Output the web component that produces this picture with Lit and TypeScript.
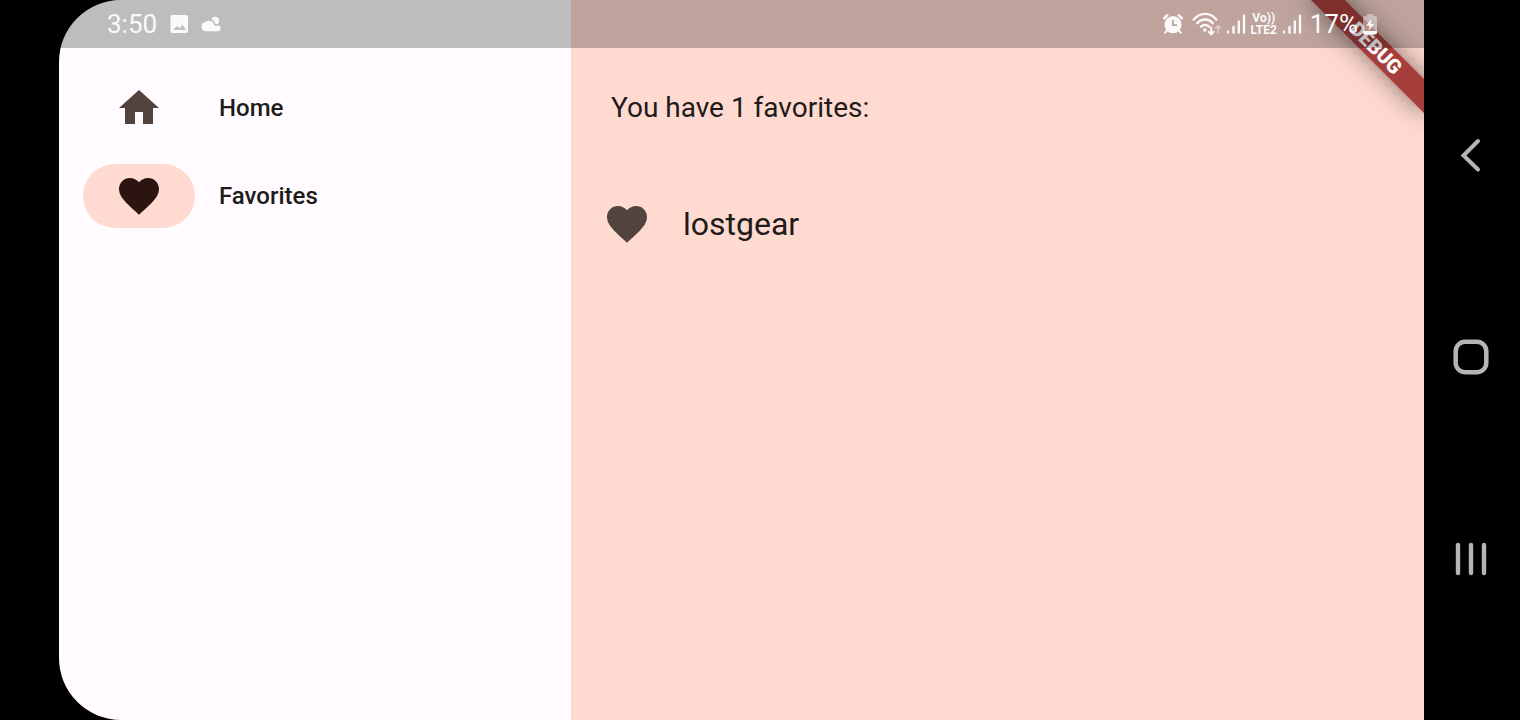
import { LitElement, html, svg, css } from "lit";
import { customElement, state } from "lit/decorators.js";

const HEART =
  "M12 21.35l-1.45-1.32C5.4 15.36 2 12.28 2 8.5 2 5.42 4.42 3 7.5 3c1.74 0 3.41.81 4.5 2.09C13.09 3.81 14.76 3 16.5 3 19.58 3 22 5.42 22 8.5c0 3.78-3.4 6.86-8.55 11.54L12 21.35z";
const HOME = "M10 20v-6h4v6h5v-8h3L12 3 2 12h3v8z";

const glyph = (d: string) => html`
  <svg class="glyph" viewBox="0 0 24 24" aria-hidden="true"><path d=${d}></path></svg>
`;

@customElement("status-bar")
class StatusBar extends LitElement {
  static styles = css`
    :host {
      display: flex;
      justify-content: space-between;
      align-items: center;
      box-sizing: border-box;
      height: 48px;
      padding: 0 46px 0 48px;
      background: rgba(0, 0, 0, 0.25);
      color: #fafafa;
      font: 400 26px/48px Roboto, sans-serif;
    }
    .group {
      display: flex;
      align-items: center;
    }
    .left {
      gap: 12px;
    }
    .right {
      gap: 4px;
    }
    .spaced {
      margin-right: 4px;
    }
    .lte {
      width: 28px;
      text-align: center;
      font-size: 12px;
      font-weight: 700;
      line-height: 12px;
    }
    svg {
      display: block;
      fill: currentColor;
    }
    .line {
      fill: none;
      stroke: currentColor;
      stroke-linecap: round;
    }
  `;

  private signal(extra = "") {
    return html`<svg class=${extra} width="20" height="22" viewBox="0 0 20 22" aria-hidden="true">
      ${svg`<g class="line" stroke-width="2.4">
        <path d="M2.200 18.700v.9M7.500 14v5.600M12.800 8.500v11.100M18 2.800v16.800"></path>
      </g>`}
    </svg>`;
  }

  render() {
    return html`
      <div class="group left">
        <span>3:50</span>
        <svg width="20" height="20" viewBox="0 0 20 20" aria-hidden="true">
          <path fill-rule="evenodd" d="M3.500 1h13.500a2 2 0 0 1 2 2v14a2 2 0 0 1-2 2H3.500a2 2 0 0 1-2-2V3a2 2 0 0 1 2-2zM4 16h13l-3.600-5.200-2.700 3.600-2.600-2.400z"></path>
        </svg>
        <svg width="22" height="20" viewBox="0 0 22 20" aria-hidden="true">
          <path d="M4.600 17.200a4.700 4.700 0 0 1-.2-9.300A5.600 5.600 0 0 1 13.400 11.400h3.400a2.900 2.900 0 0 1 0 5.800z"></path>
          <path d="M10.200 4.900a4.200 4.200 0 0 1 7.900 2c0 1.100-.4 2.200-1.300 3h-2.300c-.7-2.200-2.200-3.900-4.300-5z"></path>
        </svg>
      </div>
      <div class="group right">
        <svg class="spaced" width="22" height="22" viewBox="0 0 22 22" aria-hidden="true">
          <path fill-rule="evenodd" d="M11 3a8.600 8.600 0 1 1 0 17.200 8.600 8.600 0 0 1 0-17.200zM10 7v6h5v-1.700h-3.200V7z"></path>
          <path class="line" stroke-width="2.600" d="M2.200 5.200l3-2.800M19.800 5.200l-3-2.800"></path>
          <path class="line" stroke-width="2" d="M5 17.500l-2 2.300M17 17.500l2 2.300"></path>
        </svg>
        <svg width="30" height="24" viewBox="0 0 30 24" aria-hidden="true">
          <path class="line" stroke-width="2.400" d="M1.700 7.600C8-.1 18.300-.1 24.300 7.600M5.200 11.200c4.600-5 11.100-5 15.600 0M9 14.700c2.400-2.300 5.700-2.300 8 0"></path>
          <circle cx="12.800" cy="18" r="1.800"></circle>
          <path class="line" stroke-width="2" d="M19.200 15.500v6.500M16.700 19.800l2.500 2.500 2.500-2.500"></path>
          <path class="line" stroke-width="1.800" opacity="0.450" d="M26.200 20.500V14M24 16l2.200-2.300 2.200 2.300"></path>
        </svg>
        ${this.signal()}
        <div class="lte"><div>Vo))</div>LTE2</div>
        ${this.signal("spaced")}
        <span>17%</span>
        <svg width="16" height="22" viewBox="0 0 16 22" aria-hidden="true">
          <path opacity="0.450" d="M5 1h6v2h2a2 2 0 0 1 2 2v13H1V5a2 2 0 0 1 2-2h2z"></path>
          <path d="M1 18h14v1.500a2 2 0 0 1-2 2H3a2 2 0 0 1-2-2z"></path>
          <path d="M9.300 6L4 12.700h3.400L6.700 17.500 12 11H8.600z"></path>
        </svg>
      </div>
    `;
  }
}

@customElement("side-rail")
class SideRail extends LitElement {
  @state() private selected = "Favorites";

  static styles = css`
    :host {
      display: block;
      box-sizing: border-box;
      padding: 76px 24px 24px;
      background: #fffbff;
    }
    nav {
      display: flex;
      flex-direction: column;
      gap: 24px;
    }
    button {
      display: flex;
      align-items: center;
      gap: 24px;
      padding: 0;
      border: 0;
      background: none;
      color: #201a18;
      font: 500 24px/32px Roboto, sans-serif;
      text-align: left;
      cursor: pointer;
    }
    .pill {
      display: grid;
      place-items: center;
      width: 112px;
      height: 64px;
      border-radius: 32px;
      color: #53433f;
    }
    .active .pill {
      background: #ffdad1;
      color: #2c1510;
    }
    .glyph {
      width: 48px;
      height: 48px;
      fill: currentColor;
    }
  `;

  render() {
    const items = [
      { label: "Home", icon: HOME },
      { label: "Favorites", icon: HEART },
    ];
    return html`<nav>
      ${items.map(
        (i) => html`<button
          type="button"
          class=${i.label === this.selected ? "active" : ""}
          @click=${() => (this.selected = i.label)}
        >
          <span class="pill">${glyph(i.icon)}</span><span>${i.label}</span>
        </button>`
      )}
    </nav>`;
  }
}

@customElement("favorites-page")
class FavoritesPage extends LitElement {
  private favorites = ["lostgear"];

  static styles = css`
    :host {
      display: block;
      box-sizing: border-box;
      padding-top: 48px;
      background: #ffdad1;
      color: #201a18;
      font-family: Roboto, sans-serif;
    }
    p {
      margin: 0;
      padding: 40px;
      font-size: 28px;
      line-height: 40px;
    }
    ul {
      margin: 0;
      padding: 0;
      list-style: none;
    }
    li {
      display: flex;
      align-items: center;
      gap: 32px;
      min-height: 112px;
      padding: 0 32px;
      font-size: 32px;
      line-height: 48px;
    }
    .glyph {
      width: 48px;
      height: 48px;
      fill: #53433f;
    }
  `;

  render() {
    return html`
      <p>You have ${this.favorites.length} favorites:</p>
      <ul>
        ${this.favorites.map((name) => html`<li>${glyph(HEART)}<span>${name}</span></li>`)}
      </ul>
    `;
  }
}

@customElement("system-nav")
class SystemNav extends LitElement {
  static styles = css`
    :host {
      display: flex;
      flex-direction: column;
      box-sizing: border-box;
      padding: 54px 2px 60px 0;
    }
    button {
      flex: 1;
      display: grid;
      place-items: center;
      padding: 0;
      border: 0;
      background: none;
      cursor: pointer;
    }
    svg {
      width: 40px;
      height: 40px;
      fill: none;
      stroke: #b5b5b5;
      stroke-linecap: round;
      stroke-linejoin: miter;
    }
  `;

  render() {
    return html`
      <button type="button" aria-label="Back">
        <svg viewBox="0 0 40 40"><path stroke-width="4" d="M27 6L12.500 20.500l14.500 14"></path></svg>
      </button>
      <button type="button" aria-label="Home">
        <svg viewBox="0 0 40 40"><rect stroke-width="4.500" x="4.700" y="4.700" width="30.600" height="30.600" rx="9.500"></rect></svg>
      </button>
      <button type="button" aria-label="Recent apps">
        <svg viewBox="0 0 40 40"><path stroke-width="4.400" d="M7 6v28M20 6v28M33 6v28"></path></svg>
      </button>
    `;
  }
}

@customElement("app-root")
class AppRoot extends LitElement {
  static styles = css`
    :host {
      display: grid;
      grid-template-columns: minmax(0, 1fr) 96px;
      box-sizing: border-box;
      min-height: 100vh;
      padding-left: 59px;
      background: #000;
    }
    .screen {
      position: relative;
      display: grid;
      grid-template-columns: 512px minmax(0, 1fr);
      overflow: hidden;
      border-radius: 62px 0 0 62px;
    }
    .ribbon {
      position: absolute;
      top: 36px;
      right: -32px;
      width: 160px;
      height: 24px;
      transform: rotate(45deg);
      background: #a83e3c;
      box-shadow: 0 0 26px rgba(0, 0, 0, 0.5);
      color: #fff;
      font: 900 20px/24px Roboto, sans-serif;
      text-align: center;
    }
    .status {
      position: absolute;
      top: 0;
      left: 0;
      right: 0;
    }
  `;

  render() {
    return html`
      <div class="screen">
        <side-rail></side-rail>
        <favorites-page></favorites-page>
        <div class="ribbon">DEBUG</div>
        <status-bar class="status"></status-bar>
      </div>
      <system-nav></system-nav>
    `;
  }
}
